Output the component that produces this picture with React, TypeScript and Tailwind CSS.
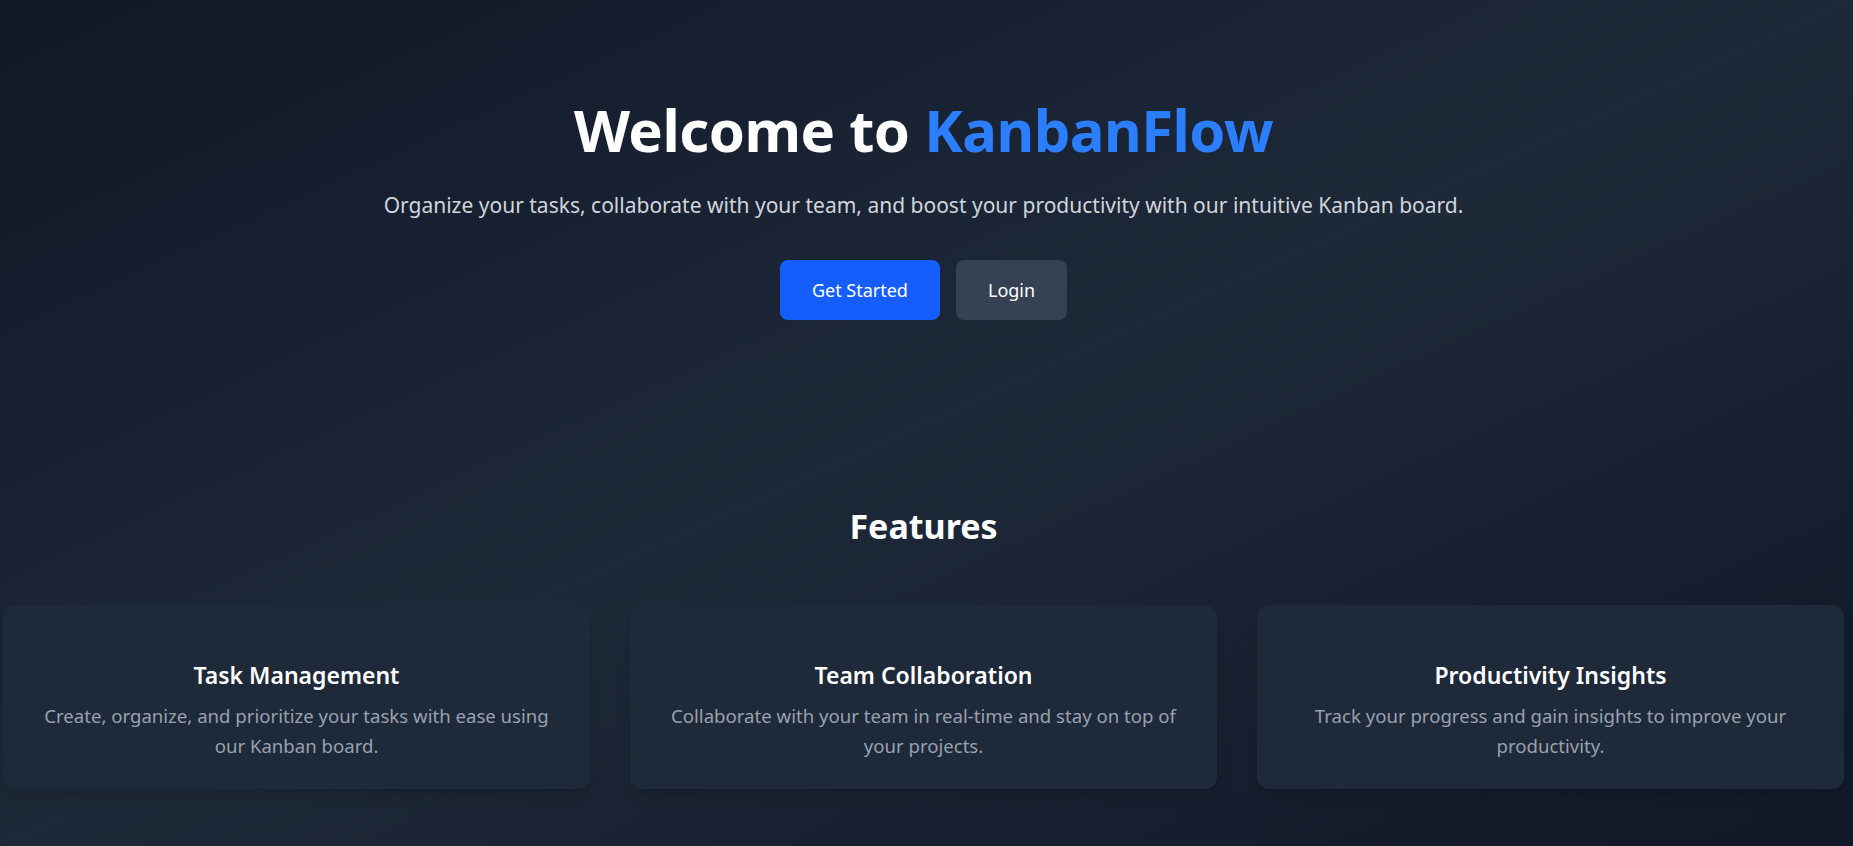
import React from "react";

const FEATURES = [
  {
    title: "Task Management",
    text: "Create, organize, and prioritize your tasks with ease using our Kanban board.",
  },
  {
    title: "Team Collaboration",
    text: "Collaborate with your team in real-time and stay on top of your projects.",
  },
  {
    title: "Productivity Insights",
    text: "Track your progress and gain insights to improve your productivity.",
  },
];

export default function App() {
  return (
    <div
      className="min-h-screen bg-linear-to-br from-gray-900 via-gray-800 to-gray-900 text-white pr-[6px]"
      style={{ fontFamily: '"Segoe UI", "Noto Sans", "Open Sans", sans-serif' }}
    >
      {/* Hero */}
      <section className="pt-[100px] flex flex-col items-center text-center">
        <h1 className="text-[58px] leading-[60px] font-bold tracking-[-0.5px]">
          Welcome to <span className="text-blue-500">KanbanFlow</span>
        </h1>
        <p className="mt-[31px] text-[21px] leading-7 text-gray-300">
          Organize your tasks, collaborate with your team, and boost your productivity with our intuitive Kanban board.
        </p>
        <div className="mt-[41px] flex gap-4">
          <button className="bg-blue-600 hover:bg-blue-700 text-white text-lg leading-7 px-8 py-4 rounded-lg">
            Get Started
          </button>
          <button className="bg-gray-700 hover:bg-gray-600 text-white text-lg leading-7 px-8 py-4 rounded-lg">
            Login
          </button>
        </div>
      </section>

      {/* Features */}
      <section className="pt-[186px] pb-[56px]">
        <h2 className="text-[34px] leading-10 font-bold text-center">Features</h2>
        <div className="mt-[59px] grid grid-cols-3 gap-10 pl-[3px] pr-[3px]">
          {FEATURES.map((f) => (
            <div
              key={f.title}
              className="bg-gray-800 rounded-xl shadow-lg pt-[54px] pb-[28px] px-8 text-center"
            >
              <h3 className="text-[23px] leading-8 font-semibold">{f.title}</h3>
              <p className="mt-[10px] text-[18.6px] leading-[30px] text-gray-400">{f.text}</p>
            </div>
          ))}
        </div>
      </section>
    </div>
  );
}
